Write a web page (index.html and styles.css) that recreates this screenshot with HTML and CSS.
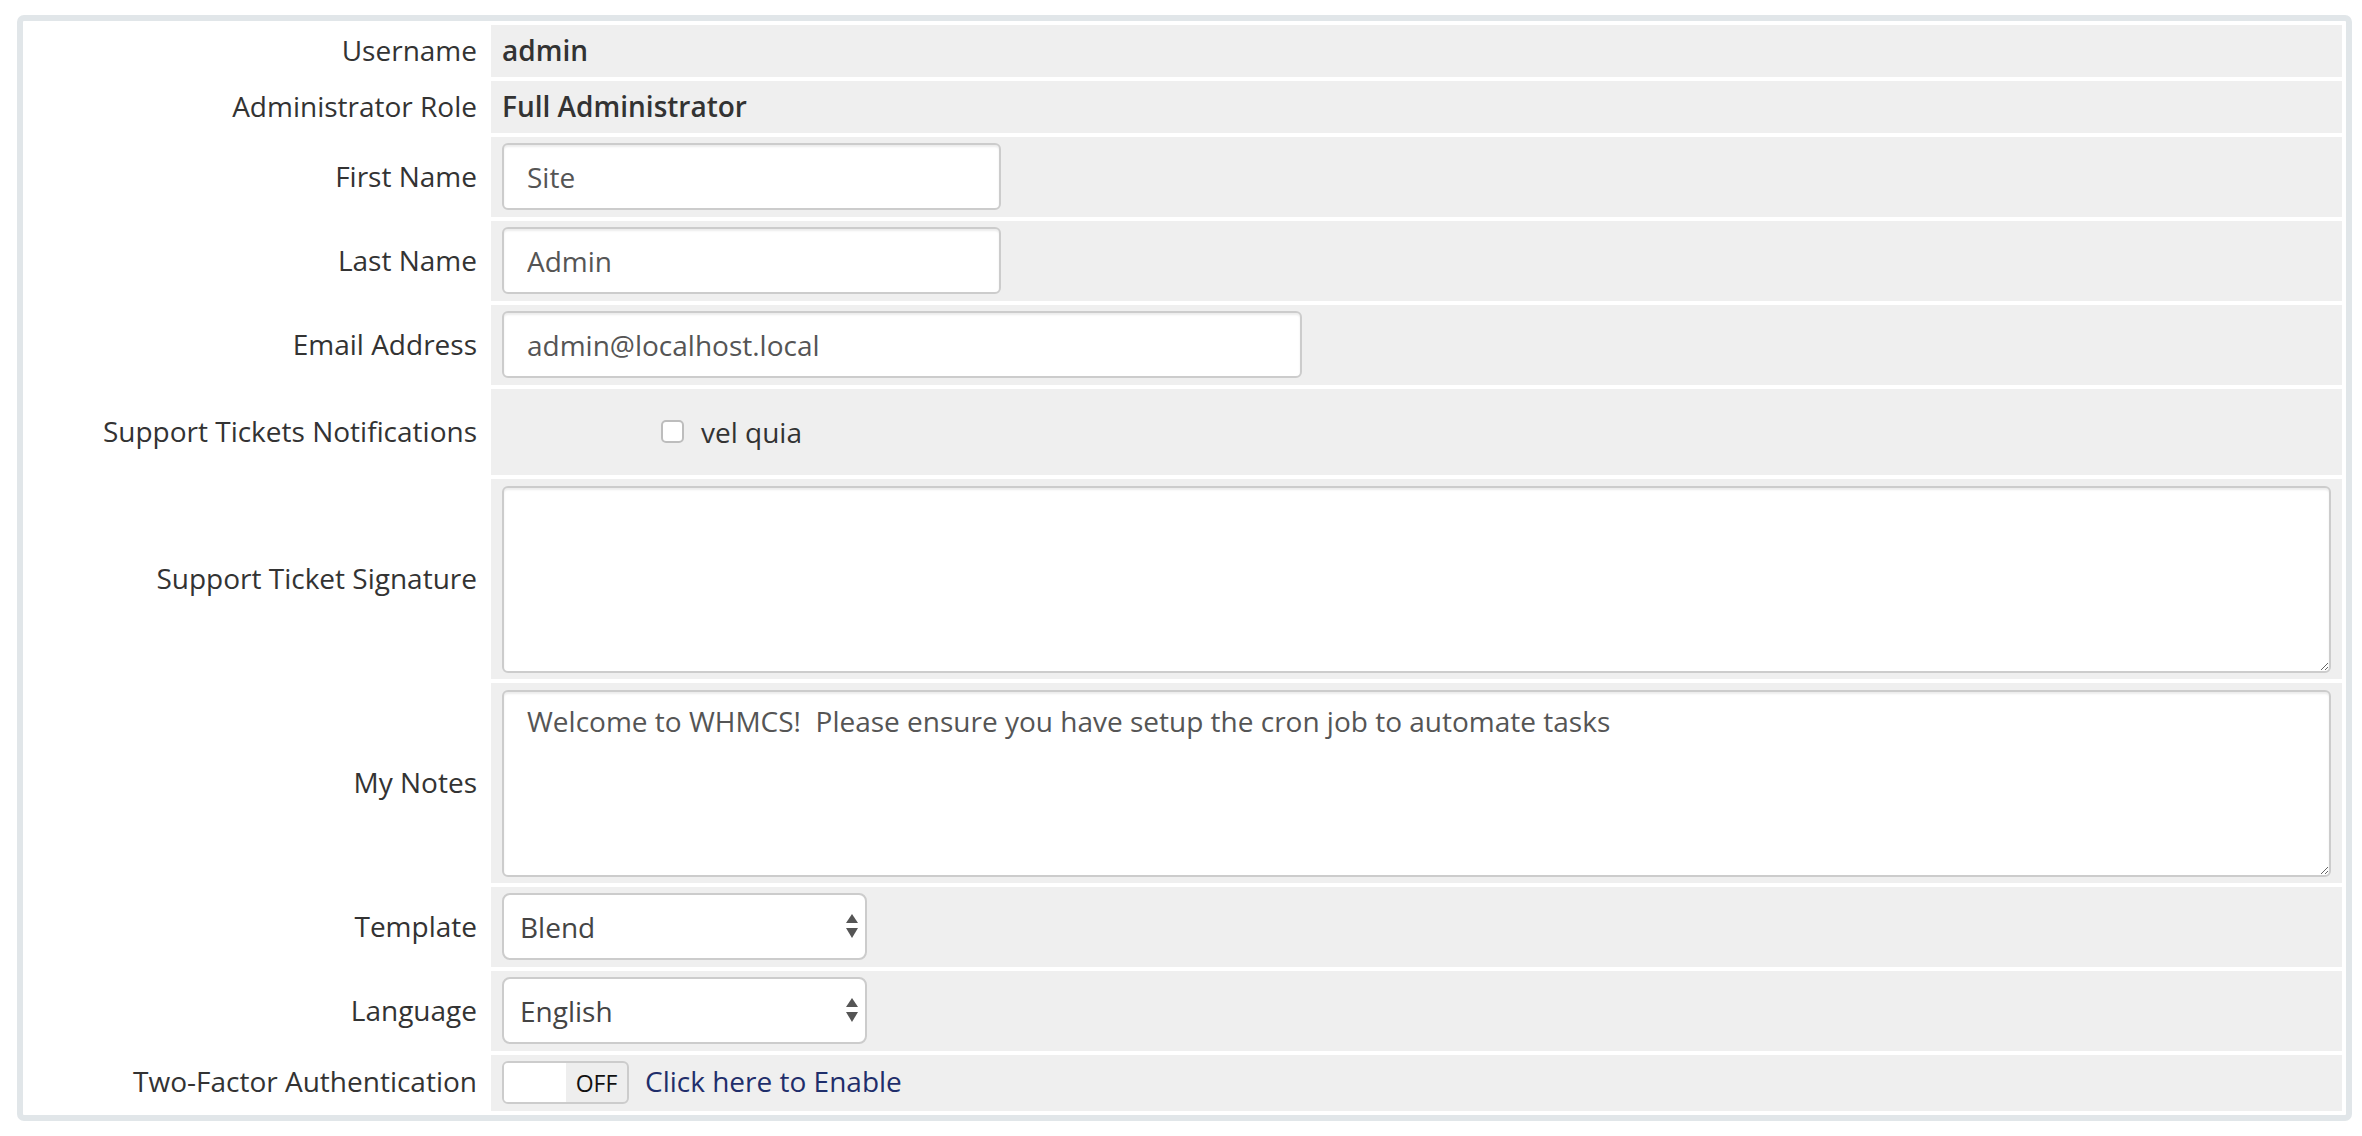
FILE: index.html
```html
<!DOCTYPE html>
<html lang="en">
<head>
<meta charset="utf-8">
<title>My Account</title>
<link rel="stylesheet" href="styles.css">
</head>
<body>
<div class="panel">
  <div class="label">Username</div>
  <div class="field field-text"><strong class="value">admin</strong></div>

  <div class="label">Administrator Role</div>
  <div class="field field-text"><strong class="value">Full Administrator</strong></div>

  <div class="label">First Name</div>
  <div class="field"><input class="input input-md" type="text" value="Site"></div>

  <div class="label">Last Name</div>
  <div class="field"><input class="input input-md" type="text" value="Admin"></div>

  <div class="label">Email Address</div>
  <div class="field"><input class="input input-lg" type="text" value="admin@localhost.local"></div>

  <div class="label">Support Tickets Notifications</div>
  <div class="field field-check">
    <label class="check"><input class="checkbox" type="checkbox"><span>vel quia</span></label>
  </div>

  <div class="label">Support Ticket Signature</div>
  <div class="field field-area"><textarea class="textarea"></textarea></div>

  <div class="label">My Notes</div>
  <div class="field field-area"><textarea class="textarea">Welcome to WHMCS!  Please ensure you have setup the cron job to automate tasks</textarea></div>

  <div class="label">Template</div>
  <div class="field">
    <div class="select-wrap">
      <select class="select"><option>Blend</option></select>
      <svg class="select-arrows" width="14" height="26" viewBox="0 0 14 26"><path d="M7 0 L13 9 L1 9 Z" fill="#555"/><path d="M1 14 L13 14 L7 24 Z" fill="#555"/></svg>
    </div>
  </div>

  <div class="label">Language</div>
  <div class="field">
    <div class="select-wrap">
      <select class="select"><option>English</option></select>
      <svg class="select-arrows" width="14" height="26" viewBox="0 0 14 26"><path d="M7 0 L13 9 L1 9 Z" fill="#555"/><path d="M1 14 L13 14 L7 24 Z" fill="#555"/></svg>
    </div>
  </div>

  <div class="label label-last">Two-Factor Authentication</div>
  <div class="field">
    <div class="switch"><span class="switch-handle"></span><span class="switch-off">OFF</span></div>
    <a class="link" href="#">Click here to Enable</a>
  </div>
</div>
</body>
</html>
```
FILE: styles.css
```css
* { box-sizing: border-box; }
html, body { margin: 0; padding: 0; background: #fff; }
body {
  font-family: "Open Sans", "Liberation Sans", sans-serif;
  font-size: 28px;
  color: #333;
}
.panel {
  margin: 15px 10px 0 17px;
  border: 6px solid #e1e6e9;
  border-radius: 7px;
  padding: 4px;
  display: grid;
  grid-template-columns: 460px 1fr;
  gap: 4px;
}
.label {
  background: #fff;
  display: flex;
  align-items: center;
  justify-content: flex-end;
  padding: 0 10px 2px 0;
  line-height: 40px;
  white-space: nowrap;
}
.label-last { padding-bottom: 4px; }
.field {
  background: #efefef;
  padding: 6px 11px 7px;
  display: flex;
  align-items: center;
}
.field-text { padding: 6px 11px 7px; }
.value {
  font-weight: 600;
  line-height: 39px;
}
.input {
  height: 67px;
  border: 2px solid #ccc;
  border-radius: 6px;
  padding: 0 23px;
  font: inherit;
  color: #555;
  background: #fff;
  box-shadow: inset 0 2px 2px rgba(0,0,0,0.075);
  outline: none;
}
.input-md { width: 499px; }
.input-lg { width: 800px; }
.field-check { height: 86px; }
.check {
  display: flex;
  align-items: center;
  margin-left: 159px;
  gap: 17px;
  line-height: 40px;
}
.checkbox {
  appearance: none;
  -webkit-appearance: none;
  margin: 0;
  width: 23px;
  height: 23px;
  border: 2px solid #bdbdbd;
  border-radius: 5px;
  background: #fff;
}
.field-area { padding: 7px 11px 6px; }
.textarea {
  width: 100%;
  height: 187px;
  border: 2px solid #ccc;
  border-radius: 6px;
  padding: 9px 23px;
  font: inherit;
  line-height: 40px;
  color: #555;
  background: #fff;
  box-shadow: inset 0 2px 2px rgba(0,0,0,0.075);
  outline: none;
  resize: both;
}
.select-wrap {
  position: relative;
  width: 365px;
  height: 67px;
}
.select {
  appearance: none;
  -webkit-appearance: none;
  width: 100%;
  height: 100%;
  border: 2px solid #ccc;
  border-radius: 8px;
  background: #fff;
  padding: 0 40px 0 16px;
  font: inherit;
  color: #444;
  outline: none;
}
.select-arrows {
  position: absolute;
  right: 8px;
  top: 21px;
  pointer-events: none;
}
.switch {
  display: flex;
  width: 127px;
  height: 43px;
  border: 2px solid #ccc;
  border-radius: 6px;
  overflow: hidden;
  background: #eee;
}
.switch-handle {
  width: 62px;
  background: #fff;
}
.switch-off {
  flex: 1;
  display: flex;
  align-items: center;
  justify-content: center;
  font-size: 23px;
  color: #111;
}
.link {
  margin-left: 16px;
  margin-bottom: 3px;
  color: #1f2e6b;
  text-decoration: none;
  line-height: 40px;
}
```
